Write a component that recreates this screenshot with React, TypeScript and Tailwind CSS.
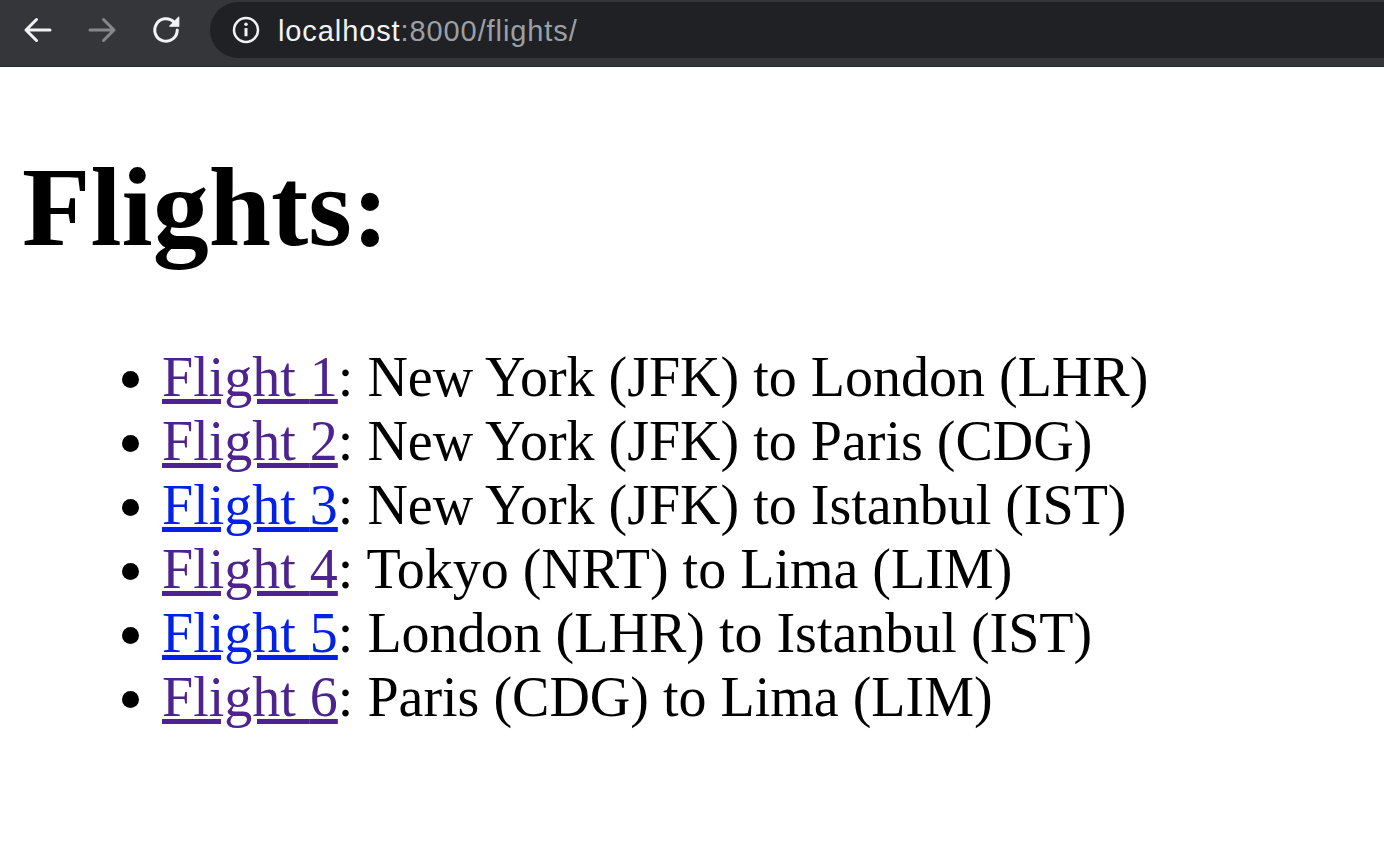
import { FC } from 'react';

interface Flight {
    id: number;
    origin: string;
    destination: string;
    visited: boolean;
}

const flights: Flight[] = [
    { id: 1, origin: "New York (JFK)", destination: "London (LHR)", visited: true },
    { id: 2, origin: "New York (JFK)", destination: "Paris (CDG)", visited: true },
    { id: 3, origin: "New York (JFK)", destination: "Istanbul (IST)", visited: false },
    { id: 4, origin: "Tokyo (NRT)", destination: "Lima (LIM)", visited: true },
    { id: 5, origin: "London (LHR)", destination: "Istanbul (IST)", visited: false },
    { id: 6, origin: "Paris (CDG)", destination: "Lima (LIM)", visited: true },
];

const BrowserBar: FC = () => {
  return (
    <div className="h-[67px] bg-[#35363a] border-b border-[#27282b] flex items-start pt-[2px]">
      <div className="flex items-center h-[56px] w-[210px] shrink-0">
        <svg className="ml-[20px]" width="36" height="36" viewBox="0 0 24 24" fill="none" stroke="#f1f3f4" strokeWidth="2" strokeLinecap="round" strokeLinejoin="round">
          <path d="M20 12H4M11 5l-7 7 7 7" />
        </svg>
        <svg className="ml-[28px]" width="36" height="36" viewBox="0 0 24 24" fill="none" stroke="#85878a" strokeWidth="2" strokeLinecap="round" strokeLinejoin="round">
          <path d="M4 12h16M13 5l7 7-7 7" />
        </svg>
        <svg className="ml-[28px]" width="36" height="36" viewBox="0 0 24 24" fill="none">
          <path d="M19.5 12a7.5 7.5 0 1 1-2.2-5.3" stroke="#f1f3f4" strokeWidth="2" strokeLinecap="round" />
          <path d="M20.5 3.5v6H14.5z" fill="#f1f3f4" stroke="#f1f3f4" strokeWidth="0.8" strokeLinejoin="round" />
        </svg>
      </div>
      <div className="flex-1 h-[56px] bg-[#202124] rounded-l-full flex items-center pl-[21px]">
        <svg width="30" height="30" viewBox="0 0 24 24" fill="none" stroke="#f1f3f4" strokeWidth="2">
          <circle cx="12" cy="12" r="9.6" />
          <path d="M12 10.5v6.5" strokeWidth="2.4" />
          <circle cx="12" cy="7.3" r="1.4" fill="#f1f3f4" stroke="none" />
        </svg>
        <span className="ml-[17px] mt-[3px] text-[29px] tracking-[0.9px]" style={{ fontFamily: '"Liberation Sans", Arial, sans-serif' }}>
          <span className="text-[#f1f3f4]">localhost</span>
          <span className="text-[#9aa0a6]">:8000/flights/</span>
        </span>
      </div>
    </div>
  );
};

const App: FC = () => {
  return (
    <div className="min-h-screen bg-white text-black" style={{ fontFamily: '"Liberation Serif", "Times New Roman", serif' }}>
      <BrowserBar />
      <div className="px-[22px]">
        <h1 className="text-[112px] font-bold leading-[128px] pt-[76px]">Flights:</h1>
        <ul className="list-disc pl-[140px] mt-[74px] text-[56px] leading-[64px]">
          {flights.map((flight) =>
            <li key={flight.id}>
              <a href="#" className={"underline " + (flight.visited ? "text-[#4c2390]" : "text-[#0320e6]")}>Flight {flight.id}</a>: {flight.origin} to {flight.destination}
            </li>
          )}
        </ul>
      </div>
    </div>
  );
};

export default App;
